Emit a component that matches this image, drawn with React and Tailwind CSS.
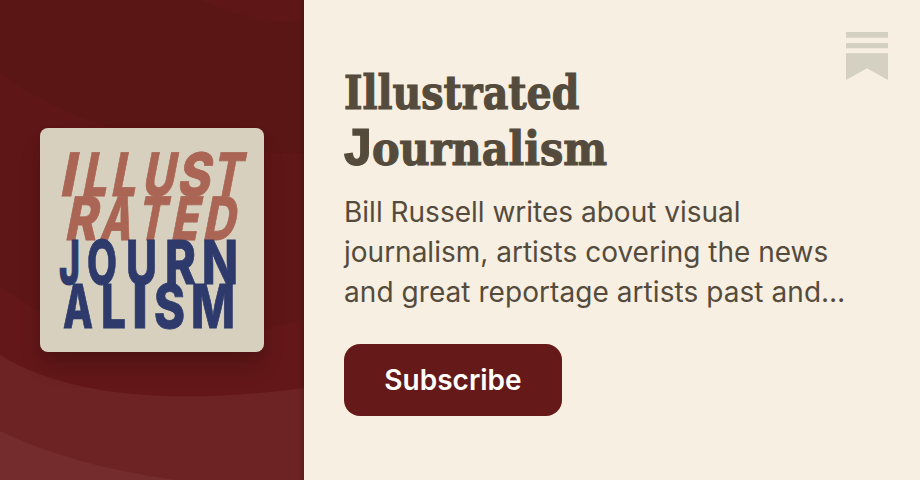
import { clsx } from "clsx";

// one entry per cover row, each letter is [char, left, width]
const coverRows = [
  {
    baseline: 68,
    slanted: true,
    letters: [["I", 19, 15], ["L", 41, 25], ["L", 70, 25], ["U", 101, 32], ["S", 136, 33], ["T", 171, 29]],
  },
  {
    baseline: 112,
    slanted: true,
    letters: [["R", 24, 32], ["A", 59, 31], ["T", 96, 28], ["E", 130, 27], ["D", 162, 32]],
  },
  {
    baseline: 156,
    slanted: false,
    letters: [["J", 19, 21], ["O", 47, 30], ["U", 86, 31], ["R", 125, 31], ["N", 162, 36]],
  },
  {
    baseline: 200,
    slanted: false,
    letters: [["A", 23, 30], ["L", 61, 25], ["I", 92, 16], ["S", 114, 31], ["M", 151, 44]],
  },
];

const CoverRow = ({ baseline, slanted, letters }) => (
  <g transform={`translate(0 ${baseline})${slanted ? " skewX(-11)" : ""}`}>
    {letters.map(([char, x, width]) => (
      <text
        key={char + x}
        x={x}
        y={0}
        textLength={width}
        lengthAdjust="spacingAndGlyphs"
        className={clsx(
          "font-['Inter'] text-[60px] font-extrabold stroke-[0.8]",
          slanted ? "fill-[#aa6554] stroke-[#aa6554]" : "fill-[#2d3a6b] stroke-[#2d3a6b]"
        )}
      >
        {char}
      </text>
    ))}
  </g>
);

const Cover = () => (
  <div className="relative h-56 w-56 overflow-hidden rounded-lg bg-[#d7d0be] shadow-[0_16px_24px_-4px_rgba(0,0,0,0.18),0_4px_8px_rgba(0,0,0,0.08)]">
    <svg viewBox="0 0 224 224" className="h-full w-full">
      {coverRows.map((row) => (
        <CoverRow key={row.baseline} {...row} />
      ))}
    </svg>
  </div>
);

// Curved bands behind the cover
const Waves = () => (
  <svg viewBox="0 0 304 480" className="absolute inset-0 h-full w-full">
    <path d="M200 0 Q248 22 292 22 L304 21 V0 Z" fill="#5f1617" />
    <path d="M0 72 Q105 153 304 153 V480 H0 Z" fill="#5f1617" />
    <path d="M0 286 Q120 375 304 319 V480 H0 Z" fill="#631718" />
    <path d="M0 355 C75 401 190 403 304 388 V480 H0 Z" fill="#6d2223" />
    <path d="M0 431 Q70 465 175 480 H0 Z" fill="#742c2d" />
  </svg>
);

const BookmarkLogo = () => (
  <svg viewBox="0 0 42 48" className="h-12 w-[42px] fill-[#d4d0c2]">
    <path d="M0 0H42V5.7H0ZM0 10.9H42V16.3H0ZM0 21.3H42V48L21 36.3L0 48Z" />
  </svg>
);

const App = () => {
  return (
    <div className="flex h-[480px] w-[920px] overflow-hidden bg-[#f7efe2]">
      <aside className="relative flex w-[304px] items-center justify-center bg-[#5a1615]">
        <Waves />
        <Cover />
        <div className="absolute inset-y-0 right-0 w-1.5 bg-linear-to-r from-transparent to-black/15" />
      </aside>

      <main className="flex flex-1 justify-between pt-8 pr-8 pl-10">
        <div className="mt-8 flex flex-col items-start">
          <h1 className="h-28 pt-px font-['Roboto_Slab','DejaVu_Serif',serif] text-[46px] leading-14 font-bold text-[#554b3c] [-webkit-text-stroke:1.2px_#554b3c]">
            <span className="block h-14 w-max origin-left scale-x-[0.86]">Illustrated</span>
            <span className="flex h-14 w-max">
              <span className="-ml-0.5 w-[30px] pt-0.5 font-['Liberation_Mono',monospace] text-[53px]">J</span>
              <span className="w-max origin-left scale-x-[0.9]">ournalism</span>
            </span>
          </h1>
          <p className="mt-4 w-max font-['Inter',sans-serif] text-[28px] leading-10 whitespace-nowrap text-[#554b3c]">
            Bill Russell writes about visual
            <br />
            journalism, artists covering the news
            <br />
            <span className="tracking-[0.06px]">and great reportage artists past and…</span>
          </p>
          <button className="mt-8 h-[72px] w-[218px] rounded-2xl bg-[#651919] font-['Inter',sans-serif] text-[28px] font-semibold text-white">
            Subscribe
          </button>
        </div>
        <BookmarkLogo />
      </main>
    </div>
  );
};

export default App;
